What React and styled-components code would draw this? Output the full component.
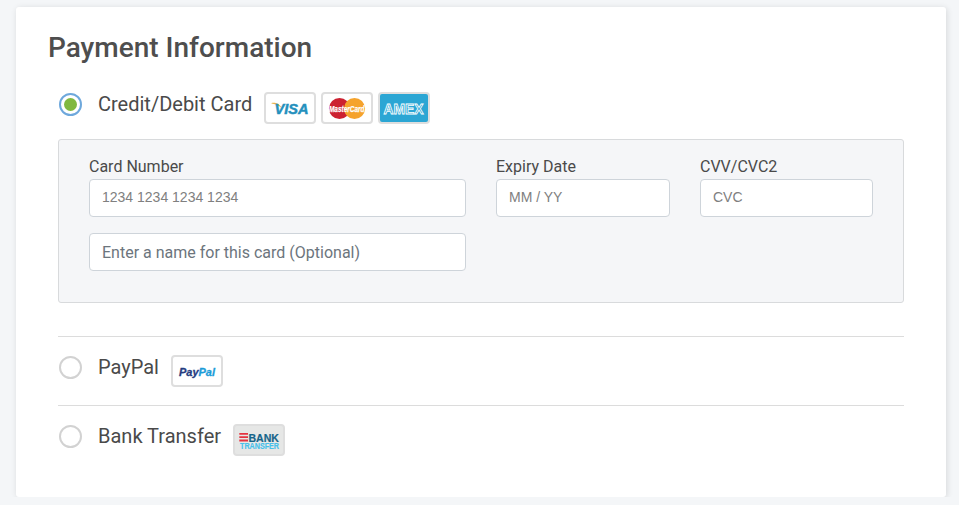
import React from "react";
import styled, { createGlobalStyle } from "styled-components";

const GlobalStyle = createGlobalStyle`
	* {
		box-sizing: border-box;
	}
	body {
		margin: 0;
		background: #f4f6f8;
		font-family: Roboto, "Liberation Sans", sans-serif;
		overflow: hidden;
	}
`;

const VisaLogo = () => (
	<svg width="48" height="28" viewBox="0 0 48 28">
		<path d="M5.500 9c4-.6 8 .5 10.500 5.500-2.500-2.700-5.500-4.300-10.500-5z" fill="#e8b44c" />
		<text x="8.500" y="19.500" fontFamily="Liberation Sans" fontSize="15.500" fontWeight="700" fontStyle="italic" fill="#2490bd" stroke="#2490bd" strokeWidth="0.500" textLength="34" lengthAdjust="spacingAndGlyphs">VISA</text>
	</svg>
);

const MasterCardLogo = () => (
	<svg width="48" height="28" viewBox="0 0 48 28">
		<circle cx="16.500" cy="14.500" r="10.500" fill="#cc2131" />
		<circle cx="31.500" cy="14.500" r="10.500" fill="#f5a32c" />
		<text x="6" y="17.500" fontFamily="Liberation Sans" fontSize="9.500" fontWeight="700" fontStyle="italic" fill="#fff" stroke="#fff" strokeWidth="0.250" textLength="35.500" lengthAdjust="spacingAndGlyphs">MasterCard</text>
	</svg>
);

const AmexLogo = () => (
	<svg width="48" height="28" viewBox="0 0 48 28">
		<text x="3.500" y="19.500" fontFamily="Liberation Sans" fontSize="14.500" fontWeight="700" fill="#2ba6d4" stroke="#fff" strokeWidth="0.800" textLength="40" lengthAdjust="spacingAndGlyphs">AMEX</text>
	</svg>
);

const PayPalLogo = () => (
	<svg width="48" height="28" viewBox="0 0 48 28">
		<text x="6" y="18.500" fontFamily="Liberation Sans" fontSize="11" fontWeight="700" fontStyle="italic" strokeWidth="0.300" textLength="36" lengthAdjust="spacingAndGlyphs">
			<tspan fill="#253b80" stroke="#253b80">Pay</tspan>
			<tspan fill="#1c9cd8" stroke="#1c9cd8">Pal</tspan>
		</text>
	</svg>
);

const BankLogo = () => (
	<svg width="48" height="28" viewBox="0 0 48 28">
		<path d="M4.300 7h8.700v1.800H4.300zM4.300 10.300h8.700v1.800H4.300zM4.300 13.600h8.700v1.800H4.300z" fill="#e5323f" />
		<text x="13.500" y="15.500" fontFamily="Liberation Sans" fontSize="11.500" fontWeight="700" fill="#17648a" stroke="#17648a" strokeWidth="0.200" textLength="30.500" lengthAdjust="spacingAndGlyphs">BANK</text>
		<text x="5" y="23" fontFamily="Liberation Sans" fontSize="8.500" fontWeight="700" fill="#45c0ea" stroke="#45c0ea" strokeWidth="0.150" textLength="39" lengthAdjust="spacingAndGlyphs">TRANSFER</text>
	</svg>
);

const PaymentForm = () => (
	<Card>
		<Title>Payment Information</Title>

		<MethodRow>
			<Radio $checked />
			<MethodLabel>Credit/Debit Card</MethodLabel>
			<Badges>
				<Badge><VisaLogo /></Badge>
				<Badge><MasterCardLogo /></Badge>
				<Badge $bg="#2ba6d4"><AmexLogo /></Badge>
			</Badges>
		</MethodRow>

		<CardPanel>
			<FieldGrid>
				<Field>
					<FieldLabel>Card Number</FieldLabel>
					<StripeInput placeholder="1234 1234 1234 1234" />
				</Field>
				<Field>
					<FieldLabel>Expiry Date</FieldLabel>
					<StripeInput placeholder="MM / YY" />
				</Field>
				<Field>
					<FieldLabel>CVV/CVC2</FieldLabel>
					<StripeInput placeholder="CVC" />
				</Field>
				<NameInput placeholder="Enter a name for this card (Optional)" />
			</FieldGrid>
		</CardPanel>

		<Divider />
		<MethodRow>
			<Radio />
			<MethodLabel>PayPal</MethodLabel>
			<Badges>
				<Badge><PayPalLogo /></Badge>
			</Badges>
		</MethodRow>

		<Divider $tight />
		<MethodRow>
			<Radio />
			<MethodLabel>Bank Transfer</MethodLabel>
			<Badges>
				<Badge $bg="#e6e7e6"><BankLogo /></Badge>
			</Badges>
		</MethodRow>
	</Card>
);

const Card = styled.div`
	width: 930px;
	height: 490px;
	margin: 7px 0 0 16px;
	padding: 25px 42px 0 32px;
	background: #fff;
	border-radius: 3px;
	box-shadow: 1px 1px 6px rgba(0, 0, 0, 0.12);
`;

const Title = styled.h2`
	margin: 0 0 28px;
	font-size: 28px;
	line-height: 32px;
	font-weight: 500;
	color: #4e4e4e;
`;

const MethodRow = styled.div`
	display: flex;
	align-items: flex-start;
	margin-left: 10px;
`;

const Radio = styled.span`
	flex: none;
	display: flex;
	align-items: center;
	justify-content: center;
	width: 23px;
	height: 23px;
	margin: 1px 0 0 1px;
	border-radius: 50%;
	border: 2px solid ${(props) => (props.$checked ? "#6ea8dc" : "#d2d2d2")};
	background: #fff;

	&::after {
		content: "";
		display: ${(props) => (props.$checked ? "block" : "none")};
		width: 13px;
		height: 13px;
		border-radius: 50%;
		background: #80b83f;
	}
`;

const MethodLabel = styled.span`
	margin-left: 16px;
	font-size: 20px;
	line-height: 24px;
	color: #4a4a4a;
`;

const Badges = styled.div`
	display: flex;
	gap: 5px;
	margin-left: 12px;
`;

const Badge = styled.div`
	width: 52px;
	height: 32px;
	border: 2px solid #dedede;
	border-radius: 4px;
	background: ${(props) => props.$bg || "#fff"};
	overflow: hidden;

	svg {
		display: block;
	}
`;

const CardPanel = styled.div`
	width: 846px;
	height: 164px;
	margin: 15px 0 0 10px;
	padding: 16px 30px 0;
	background: #f5f6f8;
	border: 1px solid #d8dadc;
	border-radius: 3px;
`;

const FieldGrid = styled.div`
	display: grid;
	grid-template-columns: 377px 174px 173px;
	column-gap: 30px;
	row-gap: 16px;
`;

const Field = styled.div`
	display: flex;
	flex-direction: column;
`;

const FieldLabel = styled.label`
	margin-bottom: 2px;
	font-size: 16px;
	line-height: 21px;
	color: #4a4a4a;
`;

const BaseInput = styled.input`
	display: block;
	width: 100%;
	height: 38px;
	padding: 0 12px;
	background: #fff;
	border: 1px solid #ced4da;
	border-radius: 4px;
	outline: none;
`;

const StripeInput = styled(BaseInput)`
	padding-bottom: 2px;
	font-family: "Liberation Sans", Arial, sans-serif;
	font-size: 14px;

	&::placeholder {
		color: #808080;
		opacity: 1;
	}
`;

const NameInput = styled(BaseInput)`
	font-family: Roboto, sans-serif;
	font-size: 16px;

	&::placeholder {
		color: #6c757d;
		opacity: 1;
	}
`;

const Divider = styled.hr`
	width: 846px;
	height: 1px;
	margin: ${(props) => (props.$tight ? "18px" : "33px")} 0 18px 10px;
	border: 0;
	background: #dcdcdc;
`;

const App = () => (
	<>
		<GlobalStyle />
		<PaymentForm />
	</>
);

export default App;
